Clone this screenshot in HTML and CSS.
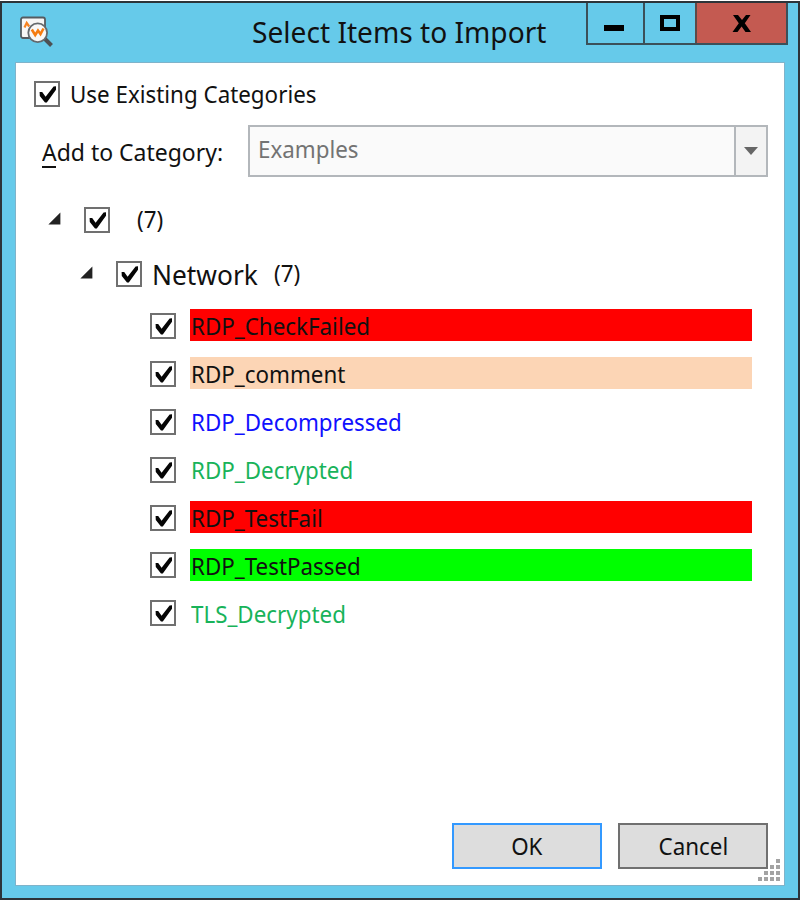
FILE: index.html
```html
<!DOCTYPE html>
<html lang="en">
<head>
<meta charset="utf-8">
<title>Select Items to Import</title>
<link rel="stylesheet" href="styles.css">
</head>
<body>
<svg class="defs" width="0" height="0" aria-hidden="true">
  <symbol id="check" viewBox="0 0 26 26">
    <rect x="1" y="1" width="24" height="24" fill="#fff" stroke="#707070" stroke-width="2"/>
    <path d="M5.600 11 8.200 11 11.600 15.800 19.600 5.600 22 5.200V8.800L12.800 21.600H11L5.800 15Z" fill="#050505"/>
  </symbol>
  <symbol id="expander" viewBox="0 0 13 13">
    <path d="M.4 12.4 12.4 .4V12.4Z" fill="#222"/>
  </symbol>
</svg>
<div class="window">
  <header class="titlebar">
    <svg class="app-icon" width="36" height="34" viewBox="0 0 36 34">
      <rect x="2" y="1.500" width="24" height="20.500" rx="2" fill="#f6f6f6" stroke="#555b60" stroke-width="1.8"/>
      <path d="m5.500 11.500 2.200-4.500 2.500 3.500" fill="none" stroke="#f58220" stroke-width="2.200"/>
      <path d="m26 23 6.500 6.500" stroke="#4c5054" stroke-width="4"/>
      <circle cx="18.700" cy="16.700" r="9.400" fill="#f8f8f8" stroke="#64696d" stroke-width="1.800"/>
      <path d="m12.800 13.500 3.400 5.500 2.800-4.500 2.500 3.500 3-5.500" fill="none" stroke="#f57c10" stroke-width="2.600"/>
    </svg>
    <h1 class="title"><span class="t t-title">Select Items to Import</span></h1>
    <div class="controls">
      <span class="ctl ctl-min"><svg width="20" height="6"><rect width="20" height="6"/></svg></span>
      <span class="ctl ctl-max"><svg width="20" height="16"><rect x="2" y="2" width="16" height="12" fill="none" stroke="#000" stroke-width="4"/></svg></span>
      <span class="ctl ctl-close"><svg width="20" height="17" viewBox="0 0 20 17"><path d="M1 0H6L10 5 14 0H18.500L12.800 8.300 19 17H13.500L9.600 11.500 5.500 17H.5L6.800 8.300Z"/></svg></span>
    </div>
  </header>
  <main class="client">
    <label class="existing"><svg class="box"><use href="#check"/></svg><span class="t">Use Existing Categories</span></label>
    <div class="category">
      <span class="category-label"><span class="t t-add"><span class="key">A</span>dd to Category:</span></span>
      <div class="combo">
        <span class="combo-value"><span class="t">Examples</span></span>
        <span class="combo-arrow"><svg width="14" height="8" viewBox="0 0 14 8"><path d="M0 0H14L7 8Z" fill="#666"/></svg></span>
      </div>
    </div>
    <div class="tree">
      <div class="node root"><svg class="exp"><use href="#expander"/></svg><svg class="box"><use href="#check"/></svg><span class="t count">(7)</span></div>
      <div class="node group"><svg class="exp"><use href="#expander"/></svg><svg class="box"><use href="#check"/></svg><span class="name"><span class="t t-network">Network</span></span><span class="t count">(7)</span></div>
      <ul class="items">
        <li><svg class="box"><use href="#check"/></svg><span class="item red"><span class="t">RDP_CheckFailed</span></span></li>
        <li><svg class="box"><use href="#check"/></svg><span class="item peach"><span class="t">RDP_comment</span></span></li>
        <li><svg class="box"><use href="#check"/></svg><span class="item blue"><span class="t">RDP_Decompressed</span></span></li>
        <li><svg class="box"><use href="#check"/></svg><span class="item green"><span class="t">RDP_Decrypted</span></span></li>
        <li><svg class="box"><use href="#check"/></svg><span class="item red"><span class="t">RDP_TestFail</span></span></li>
        <li class="raised"><svg class="box"><use href="#check"/></svg><span class="item lime"><span class="t">RDP_TestPassed</span></span></li>
        <li class="raised"><svg class="box"><use href="#check"/></svg><span class="item green"><span class="t">TLS_Decrypted</span></span></li>
      </ul>
    </div>
    <footer class="actions">
      <button class="btn ok"><span class="t">OK</span></button>
      <button class="btn"><span class="t">Cancel</span></button>
    </footer>
    <svg class="grip" width="22" height="22" viewBox="0 0 22 22" fill="#a3a3a3">
      <path d="M18 0h4v4h-4zM12 6h4v4h-4zM18 6h4v4h-4zM6 12h4v4H6zM12 12h4v4h-4zM18 12h4v4h-4zM0 18h4v4H0zM6 18h4v4H6zM12 18h4v4h-4zM18 18h4v4h-4z"/>
    </svg>
  </main>
</div>
</body>
</html>
```

FILE: styles.css
```css
* { box-sizing: border-box; }
body {
  margin: 0;
  background: #fff;
  color: #111;
  font: 24px/32px "Noto Sans", "Open Sans", sans-serif;
}
svg { display: block; flex: none; }
.defs { position: absolute; }
.t { display: inline-block; white-space: pre; transform-origin: 0 50%; transform: scaleX(.932); }
.t-title { transform: scaleX(.97); }
.t-add { transform: scaleX(.957); }
.t-network { transform: scaleX(.975); }
.window {
  width: 800px;
  height: 899px;
  margin-top: 1px;
  display: flex;
  flex-direction: column;
  padding: 0 14px 13px;
  background: #66caea;
  border: 2px solid #2d3439;
}
.titlebar { height: 60px; display: flex; align-items: flex-start; }
.app-icon { margin: 13px 0 0 3px; }
.title { flex: 1; min-width: 0; margin: 12px 0 0 197px; font-size: 29px; line-height: 34px; font-weight: 400; }
.controls {
  display: flex;
  flex: none;
  width: 202px;
  height: 42px;
  margin-right: -4px;
  border: 2px solid #3b5059;
  border-top: 0;
}
.ctl { display: flex; justify-content: center; padding-top: 12px; }
.ctl-min { width: 57px; padding: 22px 3px 0 0; border-right: 2px solid #3b5059; }
.ctl-max { width: 52px; border-right: 2px solid #5d4a48; }
.ctl-close { flex: 1; background: #c45a51; }
.client {
  position: relative;
  flex: 1;
  display: flex;
  flex-direction: column;
  background: #fff;
  box-shadow: 0 0 0 1px #7fb3ca;
}
.box { width: 26px; height: 26px; }
.exp { width: 13px; height: 13px; margin-top: -4px; }
.existing { display: flex; align-items: center; gap: 10px; height: 32px; margin: 15px 0 0 18px; }
.category { display: flex; margin: 15px 16px 0 26px; height: 52px; }
.category-label { width: 206px; padding-top: 11px; }
.key { box-shadow: 0 -2px 0 #111 inset; }
.combo { flex: 1; display: flex; border: 2px solid #b3b7bb; background: #fafafa; }
.combo-value { flex: 1; padding: 6px 0 0 8px; color: #737373; }
.combo-arrow { width: 32px; border-left: 2px solid #b3b7bb; background: #f3f3f3; padding: 20px 0 0 8px; }
.tree { flex: 1; }
.node { display: flex; align-items: center; }
.count { margin: -2px 0 0 1px; }
.root { height: 32px; margin: 27px 0 0 32px; }
.root .box { margin: 0 26px 0 23px; }
.group { height: 32px; margin: 22px 0 0 64px; }
.group .box { margin: 0 10px 0 23px; }
.name { width: 121px; font-size: 27px; padding-top: 2px; }
.items { list-style: none; margin: 19px 32px 0 134px; padding: 0; display: grid; gap: 16px; }
.items li { display: flex; align-items: center; gap: 14px; height: 32px; }
.items .box { margin-top: 2px; }
.items .raised .box { margin-top: -1px; }
.item { flex: 1; height: 32px; padding-left: 1px; line-height: 34px; }
.red { background: #f00; }
.peach { background: #fcd5b5; }
.lime { background: #0f0; }
.blue { color: #1010ff; }
.green { color: #18b35a; }
.actions { display: flex; justify-content: flex-end; gap: 16px; margin: 0 16px 16px; }
.btn {
  width: 150px;
  height: 46px;
  padding: 0;
  border: 2px solid #707070;
  background: #ddd;
  color: #111;
  font: inherit;
}
.btn .t { transform-origin: 50% 50%; }
.ok { border-color: #3399ff; }
.grip { position: absolute; right: 4px; bottom: 4px; }
```
